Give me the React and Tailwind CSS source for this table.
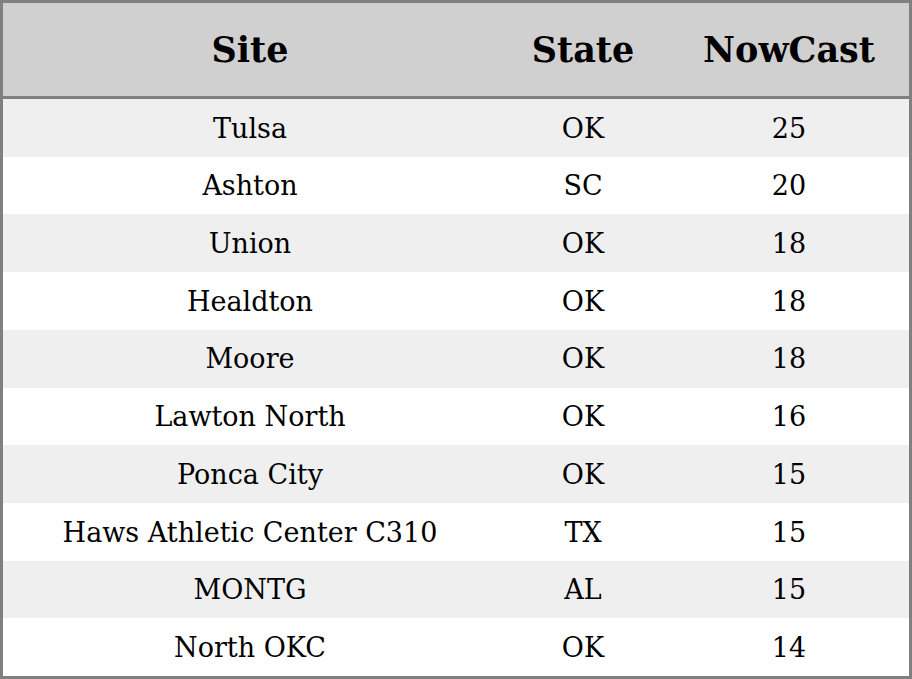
import React from 'react'

const rows = [
  { site: 'Tulsa', state: 'OK', nowcast: 25 },
  { site: 'Ashton', state: 'SC', nowcast: 20 },
  { site: 'Union', state: 'OK', nowcast: 18 },
  { site: 'Healdton', state: 'OK', nowcast: 18 },
  { site: 'Moore', state: 'OK', nowcast: 18 },
  { site: 'Lawton North', state: 'OK', nowcast: 16 },
  { site: 'Ponca City', state: 'OK', nowcast: 15 },
  { site: 'Haws Athletic Center C310', state: 'TX', nowcast: 15 },
  { site: 'MONTG', state: 'AL', nowcast: 15 },
  { site: 'North OKC', state: 'OK', nowcast: 14 },
]

const App = () => {
  return (
    <div className="w-[912px] h-[679px] border-[3px] border-[#808080] bg-white text-black font-['DejaVu_Serif',serif] flex flex-col">
      <div className="flex h-[96px] shrink-0 bg-[#d0d0d0] border-b-[3px] border-[#808080] items-center pt-[2px] text-[35px] font-bold">
        <div className="w-[494px] text-center">Site</div>
        <div className="w-[172px] text-center">State</div>
        <div className="flex-1 text-center">NowCast</div>
      </div>
      {rows.map((r, i) => (
        <div key={i} className={`flex flex-1 items-center pt-[2px] text-[27px] ${i % 2 === 0 ? 'bg-[#efefef]' : 'bg-white'}`}>
          <div className="w-[494px] text-center">{r.site}</div>
          <div className="w-[172px] text-center">{r.state}</div>
          <div className="flex-1 text-center">{r.nowcast}</div>
        </div>
      ))}
    </div>
  )
}

export default App
